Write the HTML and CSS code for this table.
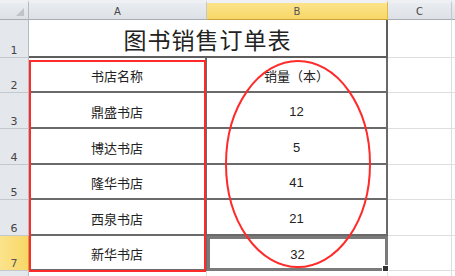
FILE: index.html
```html
<!DOCTYPE html>
<html lang="zh">
<head>
<meta charset="utf-8">
<link rel="stylesheet" href="styles.css">
</head>
<body>
<div class="sheet">
  <div class="hdr corner"><span class="tri"></span></div>
  <div class="hdr col">A</div>
  <div class="hdr col active">B</div>
  <div class="hdr col">C</div>
  <div class="hdr col last"></div>

  <div class="rh">1</div>
  <div class="cell title span2">图书销售订单表</div>
  <div class="cell blank"></div>
  <div class="cell blank last"></div>

  <div class="rh">2</div>
  <div class="cell data">书店名称</div>
  <div class="cell data">销量（本）</div>
  <div class="cell blank"></div>
  <div class="cell blank last"></div>

  <div class="rh">3</div>
  <div class="cell data">鼎盛书店</div>
  <div class="cell data num">12</div>
  <div class="cell blank"></div>
  <div class="cell blank last"></div>

  <div class="rh">4</div>
  <div class="cell data">博达书店</div>
  <div class="cell data num">5</div>
  <div class="cell blank"></div>
  <div class="cell blank last"></div>

  <div class="rh">5</div>
  <div class="cell data">隆华书店</div>
  <div class="cell data num">41</div>
  <div class="cell blank"></div>
  <div class="cell blank last"></div>

  <div class="rh">6</div>
  <div class="cell data">西泉书店</div>
  <div class="cell data num">21</div>
  <div class="cell blank"></div>
  <div class="cell blank last"></div>

  <div class="rh active">7</div>
  <div class="cell data">新华书店</div>
  <div class="cell data num selected">32<span class="handle"></span></div>
  <div class="cell blank"></div>
  <div class="cell blank last"></div>

  <div class="rh"></div>
  <div class="cell blank"></div>
  <div class="cell blank"></div>
  <div class="cell blank"></div>
  <div class="cell blank last"></div>

  <svg class="marks" width="455" height="276" viewBox="0 0 455 276">
    <rect x="30" y="61" width="175" height="210" fill="none" stroke="#ff2a2a" stroke-width="2"/>
    <ellipse cx="298" cy="164" rx="72" ry="103" fill="none" stroke="#ff2a2a" stroke-width="2"/>
  </svg>
</div>
</body>
</html>
```

FILE: styles.css
```css
html, body {
  margin: 0;
  padding: 0;
  background: #ffffff;
}
body {
  width: 455px;
  height: 276px;
  overflow: hidden;
}
.sheet {
  position: relative;
  display: grid;
  grid-template-columns: 29px 178px 181px 64px 1fr;
  grid-template-rows: 20px 38px 35px 36px 36px 35px 36px 35px 10px;
  width: 455px;
  height: 276px;
  overflow: hidden;
  font-family: "Noto Sans CJK SC", "Noto Sans", sans-serif;
  color: #222;
}
.hdr {
  box-sizing: border-box;
  background: linear-gradient(#e9ecf0, #dde1e6);
  border-top: 3px solid #eef0f3;
  border-right: 1px solid #c3c8cf;
  border-bottom: 1px solid #a7adb5;
  font-family: "DejaVu Sans", sans-serif;
  font-size: 10px;
  color: #444;
  display: flex;
  align-items: center;
  justify-content: center;
  padding-top: 1px;
}
.hdr.corner {
  position: relative;
  border-right-color: #b5bbc3;
}
.tri {
  position: absolute;
  right: 4px;
  bottom: 3px;
  width: 0;
  height: 0;
  border-left: 8px solid transparent;
  border-bottom: 8px solid #bfc4ca;
}
.hdr.active {
  background: linear-gradient(#fbe38c, #f8d766);
  border-right-color: #e0b84a;
  border-bottom-color: #c9a23c;
  color: #555;
}
.hdr.last {
  border-right: none;
}
.rh {
  box-sizing: border-box;
  background: #e4e7eb;
  border-right: 1px solid #b5bbc3;
  border-bottom: 1px solid #c3c8cf;
  font-family: "DejaVu Sans", sans-serif;
  font-size: 11px;
  line-height: 11px;
  color: #444;
  display: flex;
  align-items: flex-end;
  justify-content: center;
  padding-bottom: 1px;
}
.rh.active {
  background: linear-gradient(90deg, #fbe38c, #f8d766);
  border-right-color: #c9a23c;
  color: #555;
}
.cell {
  box-sizing: border-box;
  display: flex;
  align-items: center;
  justify-content: center;
}
.span2 {
  grid-column: span 2;
}
.title {
  font-size: 23px;
  letter-spacing: 1px;
  border-right: 2px solid #5e5e5e;
  border-bottom: 2px solid #5e5e5e;
  padding-top: 2px;
}
.data {
  font-size: 13px;
  border-right: 2px solid #6a6a6a;
  border-bottom: 2px solid #6a6a6a;
  padding-top: 2px;
}
.num {
  font-family: "Liberation Sans", sans-serif;
  font-size: 13px;
}
.selected {
  position: relative;
  border: 3px solid #7a7a7a;
}
.handle {
  position: absolute;
  right: -4px;
  bottom: -4px;
  width: 5px;
  height: 5px;
  background: #333;
  border: 1px solid #fff;
}
.blank {
  border-right: 1px solid #dcdee1;
  border-bottom: 1px solid #dcdee1;
}
.blank.last {
  border-right: none;
}
.marks {
  position: absolute;
  left: 0;
  top: 0;
  pointer-events: none;
}
```
